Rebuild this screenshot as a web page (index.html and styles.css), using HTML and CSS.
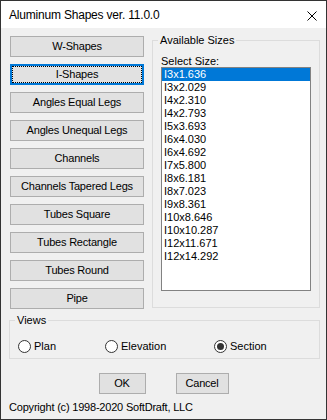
FILE: index.html
```html
<!DOCTYPE html>
<html lang="en">
<head>
    <meta charset="UTF-8">
    <meta name="viewport" content="width=device-width, initial-scale=1.0">
    <title>Aluminum Shapes</title>
    <link rel="stylesheet" href="styles.css">
</head>
<body>
    <div class="window">
        <div class="titlebar">
            <span class="title">Aluminum Shapes ver. 11.0.0</span>
            <svg class="close" width="10" height="10" viewBox="0 0 10 10">
                <path d="M0.5 0.5 L9.5 9.5 M9.5 0.5 L0.5 9.5" stroke="#000" stroke-width="1" fill="none"/>
            </svg>
        </div>

        <div class="client">
            <div class="top">
                <div class="shape-list">
                    <button class="btn">W-Shapes</button>
                    <button class="btn focused">I-Shapes</button>
                    <button class="btn">Angles Equal Legs</button>
                    <button class="btn">Angles Unequal Legs</button>
                    <button class="btn">Channels</button>
                    <button class="btn">Channels Tapered Legs</button>
                    <button class="btn">Tubes Square</button>
                    <button class="btn">Tubes Rectangle</button>
                    <button class="btn">Tubes Round</button>
                    <button class="btn">Pipe</button>
                </div>

                <fieldset class="group sizes">
                    <legend>Available Sizes</legend>
                    <div class="select-label">Select Size:</div>
                    <ul class="listbox">
                        <li class="selected">I3x1.636</li>
                        <li>I3x2.029</li>
                        <li>I4x2.310</li>
                        <li>I4x2.793</li>
                        <li>I5x3.693</li>
                        <li>I6x4.030</li>
                        <li>I6x4.692</li>
                        <li>I7x5.800</li>
                        <li>I8x6.181</li>
                        <li>I8x7.023</li>
                        <li>I9x8.361</li>
                        <li>I10x8.646</li>
                        <li>I10x10.287</li>
                        <li>I12x11.671</li>
                        <li>I12x14.292</li>
                    </ul>
                </fieldset>
            </div>

            <fieldset class="group views">
                <legend>Views</legend>
                <div class="radio-row">
                    <label class="radio"><span class="dot"></span>Plan</label>
                    <label class="radio"><span class="dot"></span>Elevation</label>
                    <label class="radio"><span class="dot checked"></span>Section</label>
                </div>
            </fieldset>

            <div class="actions">
                <button class="btn ok-btn">OK</button>
                <button class="btn cancel-btn">Cancel</button>
            </div>

            <div class="copyright">Copyright (c) 1998-2020 SoftDraft, LLC</div>
        </div>
    </div>
</body>
</html>
```

FILE: styles.css
```css
body {
    margin: 0;
    font-family: 'Liberation Sans', Arial, sans-serif;
    font-size: 11px;
    color: #000;
    background: #f0f0f0;
}

.window {
    width: 327px;
    height: 420px;
    box-sizing: border-box;
    border: 1px solid #333;
    background-color: #f0f0f0;
    display: flex;
    flex-direction: column;
}

.titlebar {
    height: 27px;
    background-color: #fff;
    display: flex;
    align-items: center;
    justify-content: space-between;
    padding: 0 9px 0 8px;
}

.title {
    font-size: 12px;
    letter-spacing: -0.2px;
    padding-top: 1px;
}

.close {
    display: block;
    margin-top: 2px;
}

.client {
    padding: 6px 6px 0 8px;
}

.top {
    display: flex;
    align-items: flex-start;
}

.shape-list {
    display: flex;
    flex-direction: column;
    gap: 7px;
    width: 134px;
    margin: 2px 8px 0 1px;
}

.btn {
    height: 21px;
    box-sizing: border-box;
    border: 1px solid #adadad;
    background-color: #e1e1e1;
    font-family: inherit;
    font-size: 11px;
    font-weight: normal;
    letter-spacing: -0.2px;
    color: #000;
    padding: 0;
    margin: 0;
    line-height: 19px;
}

.btn.focused {
    border: 2px solid #0078d7;
    line-height: 17px;
    outline: 1px dotted #000;
    outline-offset: -3px;
}

.group {
    margin: 0;
    border: 1px solid #dcdcdc;
    box-sizing: border-box;
    min-width: 0;
}

.group legend {
    padding: 0 2px;
    margin-left: -3px;
    line-height: 13px;
}

.sizes {
    width: 168px;
    padding: 8px 8px 16px 8px;
}

.select-label {
    height: 12px;
    line-height: 13px;
}

.listbox {
    list-style: none;
    margin: 0;
    padding: 0;
    width: 150px;
    height: 224px;
    box-sizing: border-box;
    border: 1px solid #828282;
    background-color: #fff;
}

.listbox li {
    height: 13px;
    line-height: 13px;
    padding-left: 2px;
}

.listbox li.selected {
    background-color: #0078d7;
    color: #fff;
}

.views {
    width: 311px;
    margin-top: 5px;
    padding: 13px 8px 5px 8px;
}

.radio-row {
    display: grid;
    grid-template-columns: 87px 109px auto;
    height: 13px;
}

.radio {
    display: flex;
    align-items: center;
    gap: 3px;
    line-height: 13px;
}

.dot {
    width: 13px;
    height: 13px;
    box-sizing: border-box;
    border: 1px solid #333;
    border-radius: 50%;
    background-color: #fff;
    display: flex;
    align-items: center;
    justify-content: center;
}

.dot.checked::after {
    content: "";
    width: 7px;
    height: 7px;
    border-radius: 50%;
    background-color: #333;
}

.actions {
    display: flex;
    justify-content: center;
    gap: 30px;
    margin-top: 14px;
    padding-right: 2px;
}

.ok-btn {
    width: 47px;
}

.cancel-btn {
    width: 53px;
}

.copyright {
    margin-top: 7px;
    line-height: 13px;
    letter-spacing: -0.2px;
}
```
